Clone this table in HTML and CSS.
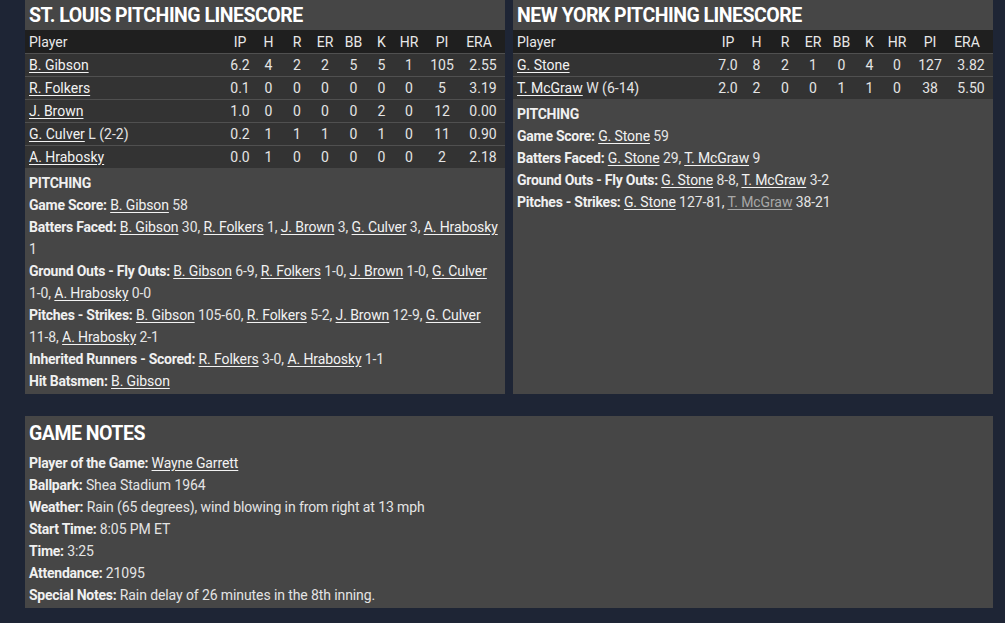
FILE: index.html
```html
<!DOCTYPE html>
<html>
<head>
<meta charset="utf-8">
<link rel="stylesheet" href="styles.css">
</head>
<body>
<div class="page">
  <div class="top">
    <section class="panel">
      <h2 class="title">ST. LOUIS PITCHING LINESCORE</h2>
      <table class="ls">
        <thead>
          <tr><th class="pl">Player</th><th class="c1">IP</th><th class="c2">H</th><th class="c3">R</th><th class="c4">ER</th><th class="c5">BB</th><th class="c6">K</th><th class="c7">HR</th><th class="c8">PI</th><th class="c9">ERA</th></tr>
        </thead>
        <tbody>
          <tr><td class="pl"><a>B. Gibson</a></td><td>6.2</td><td>4</td><td>2</td><td>2</td><td>5</td><td>5</td><td>1</td><td>105</td><td>2.55</td></tr>
          <tr><td class="pl"><a>R. Folkers</a></td><td>0.1</td><td>0</td><td>0</td><td>0</td><td>0</td><td>0</td><td>0</td><td>5</td><td>3.19</td></tr>
          <tr><td class="pl"><a>J. Brown</a></td><td>1.0</td><td>0</td><td>0</td><td>0</td><td>0</td><td>2</td><td>0</td><td>12</td><td>0.00</td></tr>
          <tr><td class="pl"><a>G. Culver</a> L (2-2)</td><td>0.2</td><td>1</td><td>1</td><td>1</td><td>0</td><td>1</td><td>0</td><td>11</td><td>0.90</td></tr>
          <tr><td class="pl"><a>A. Hrabosky</a></td><td>0.0</td><td>1</td><td>0</td><td>0</td><td>0</td><td>0</td><td>0</td><td>2</td><td>2.18</td></tr>
        </tbody>
      </table>
      <div class="notes">
        <div class="line"><b>PITCHING</b></div>
        <div class="line"><b>Game Score:</b> <a>B. Gibson</a> 58</div>
        <div class="line"><b>Batters Faced:</b> <a>B. Gibson</a> 30, <a>R. Folkers</a> 1, <a>J. Brown</a> 3, <a>G. Culver</a> 3, <a>A. Hrabosky</a> 1</div>
        <div class="line"><b>Ground Outs - Fly Outs:</b> <a>B. Gibson</a> 6-9, <a>R. Folkers</a> 1-0, <a>J. Brown</a> 1-0, <a>G. Culver</a> 1-0, <a>A. Hrabosky</a> 0-0</div>
        <div class="line"><b>Pitches - Strikes:</b> <a>B. Gibson</a> 105-60, <a>R. Folkers</a> 5-2, <a>J. Brown</a> 12-9, <a>G. Culver</a> 11-8, <a>A. Hrabosky</a> 2-1</div>
        <div class="line"><b>Inherited Runners - Scored:</b> <a>R. Folkers</a> 3-0, <a>A. Hrabosky</a> 1-1</div>
        <div class="line"><b>Hit Batsmen:</b> <a>B. Gibson</a></div>
      </div>
    </section>
    <section class="panel">
      <h2 class="title">NEW YORK PITCHING LINESCORE</h2>
      <table class="ls">
        <thead>
          <tr><th class="pl">Player</th><th class="c1">IP</th><th class="c2">H</th><th class="c3">R</th><th class="c4">ER</th><th class="c5">BB</th><th class="c6">K</th><th class="c7">HR</th><th class="c8">PI</th><th class="c9">ERA</th></tr>
        </thead>
        <tbody>
          <tr><td class="pl"><a>G. Stone</a></td><td>7.0</td><td>8</td><td>2</td><td>1</td><td>0</td><td>4</td><td>0</td><td>127</td><td>3.82</td></tr>
          <tr><td class="pl"><a>T. McGraw</a> W (6-14)</td><td>2.0</td><td>2</td><td>0</td><td>0</td><td>1</td><td>1</td><td>0</td><td>38</td><td>5.50</td></tr>
        </tbody>
      </table>
      <div class="notes">
        <div class="line"><b>PITCHING</b></div>
        <div class="line"><b>Game Score:</b> <a>G. Stone</a> 59</div>
        <div class="line"><b>Batters Faced:</b> <a>G. Stone</a> 29, <a>T. McGraw</a> 9</div>
        <div class="line"><b>Ground Outs - Fly Outs:</b> <a>G. Stone</a> 8-8, <a>T. McGraw</a> 3-2</div>
        <div class="line"><b>Pitches - Strikes:</b> <a>G. Stone</a> 127-81, <a class="dim">T. McGraw</a> 38-21</div>
      </div>
    </section>
  </div>
  <section class="panel wide">
    <h2 class="title">GAME NOTES</h2>
    <div class="notes gn">
      <div class="line"><b>Player of the Game:</b> <a>Wayne Garrett</a></div>
      <div class="line"><b>Ballpark:</b> Shea Stadium 1964</div>
      <div class="line"><b>Weather:</b> Rain (65 degrees), wind blowing in from right at 13 mph</div>
      <div class="line"><b>Start Time:</b> 8:05 PM ET</div>
      <div class="line"><b>Time:</b> 3:25</div>
      <div class="line"><b>Attendance:</b> 21095</div>
      <div class="line"><b>Special Notes:</b> Rain delay of 26 minutes in the 8th inning.</div>
    </div>
  </section>
</div>
</body>
</html>
```
FILE: styles.css
```css
html, body {
  margin: 0;
  padding: 0;
}
body {
  background: #1e2535;
  color: #e4e4e4;
  font-family: Roboto, "Noto Sans", sans-serif;
  font-size: 14px;
  height: 623px;
  overflow: hidden;
}
.page {
  padding: 0 12px 0 25px;
  display: flex;
  flex-direction: column;
  gap: 22px;
}
.top {
  display: flex;
  gap: 8px;
  align-items: stretch;
}
.panel {
  background: #464646;
  flex: 1 1 0;
  min-width: 0;
}
.title {
  margin: 0;
  font-size: 19.5px;
  font-weight: 700;
  color: #fff;
  line-height: 28px;
  padding: 2px 4px 0;
  letter-spacing: -0.5px;
}
.ls {
  width: 100%;
  border-collapse: collapse;
}
.ls th, .ls td {
  height: 22px;
  padding: 0;
  text-align: center;
  font-weight: 400;
  white-space: nowrap;
}
.ls thead tr {
  background: #1f1f1f;
}
.ls th {
  height: 23px;
  color: #e8e8e8;
}
.ls tbody tr {
  background: #333333;
  border-top: 1px solid #505050;
}
.ls .pl {
  text-align: left;
  padding-left: 4px;
}
.ls .c1 { width: 28px; }
.ls .c2 { width: 29px; }
.ls .c3 { width: 28px; }
.ls .c4 { width: 28px; }
.ls .c5 { width: 29px; }
.ls .c6 { width: 27px; }
.ls .c7 { width: 28px; }
.ls .c8 { width: 38px; }
.ls .c9 { width: 36px; padding-right: 8px; }
a {
  color: #f2f2f2;
  text-decoration: underline;
  text-underline-offset: 2px;
  white-space: nowrap;
}
a.dim {
  color: #a8a8a8;
}
.notes {
  padding: 4px 4px 2px;
}
.line {
  line-height: 22px;
  letter-spacing: -0.1px;
}
.line b {
  font-weight: 700;
  color: #f0f0f0;
  letter-spacing: -0.25px;
}
.wide .title {
  line-height: 28px;
  padding-top: 4px;
}
.gn {
  padding-top: 4px;
  padding-bottom: 2px;
}
```
